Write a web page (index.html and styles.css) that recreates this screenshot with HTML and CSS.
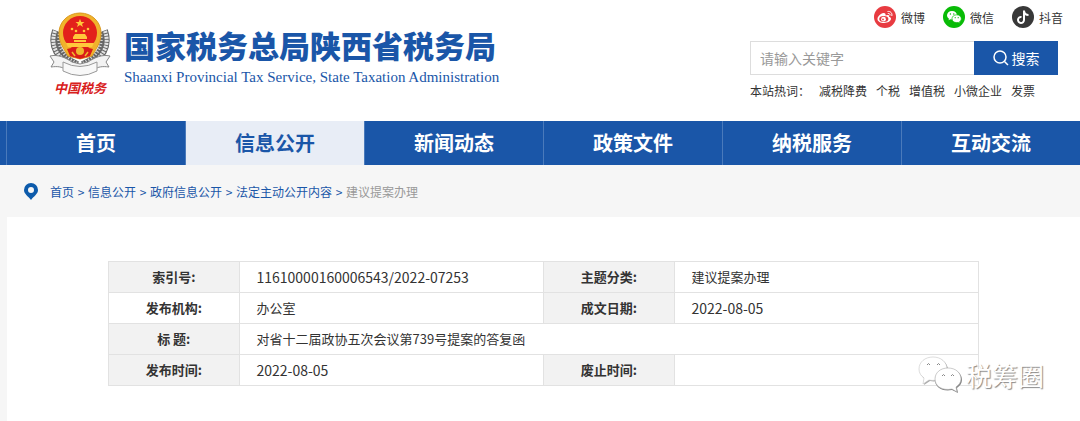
FILE: index.html
```html
<!DOCTYPE html>
<html lang="zh-CN">
<head>
  <meta charset="UTF-8" />
  <meta name="viewport" content="width=device-width, initial-scale=1.0" />
  <title>建议提案办理</title>
  <link rel="stylesheet" href="styles.css">
</head>
<body>
  <header class="header">
    <a class="brand" href="#">
      <span class="emblem">
        <svg width="64" height="66" viewBox="0 0 64 66" aria-hidden="true">
          <!-- wheat ears -->
          <g fill="none" stroke="#666" stroke-width="10">
            <path d="M9 19C4 33 10 46 29 54" />
            <path d="M55 19C60 33 54 46 35 54" />
          </g>
          <g fill="none" stroke="#e4e4e4" stroke-width="4" stroke-dasharray="2 1">
            <path d="M7 19C2 33 8 47 29 56" />
            <path d="M57 19C62 33 56 47 35 56" />
          </g>
          <g fill="none" stroke="#ddd" stroke-width="3" stroke-dasharray="1 2">
            <path d="M12 19C8 33 14 44 29 51" />
            <path d="M52 19C56 33 50 44 35 51" />
          </g>
          <!-- ribbon -->
          <path d="M2 44C10 42 18 46 24 50L32 52L40 50C46 46 54 42 62 44L58 50L61 55C54 54 50 55 47 57L32 59L17 57C14 55 10 54 3 55L6 50Z" fill="#f3f3f3" stroke="#888" />
          <path d="M15 50Q32 59 49 50V59Q32 68 15 59Z" fill="#f8f8f8" stroke="#999" />
          <!-- national emblem -->
          <path d="M32 1C44 1 53 10 53 21C53 31 48 37 44 44L32 47L20 44C16 37 11 31 11 21C11 10 20 1 32 1Z" fill="#f0b32c" stroke="#dc9a22" />
          <circle cx="32" cy="21" r="17" fill="#e3201b" />
          <path d="M32 7l1.300 3h3.200l-2.500 2 1 3-3-2-3 2 1-3-2.500-2h3.200z" fill="#ffc83b" />
          <g fill="#ffc83b">
            <circle cx="24" cy="17" r="1.300" />
            <circle cx="28" cy="19" r="1.300" />
            <circle cx="36" cy="19" r="1.300" />
            <circle cx="40" cy="17" r="1.300" />
            <path d="M25 25l2-3h10l2 3v2H25zM26 28h12v2H26zM18 31h28l-2 4H20z" />
          </g>
          <path d="M19 37L27 35L32 38L37 35L45 37L42 44L32 47L22 44Z" fill="#d91c19" />
          <circle cx="32" cy="39" r="4" fill="#f0b72c" />
          <path d="M24 40l3 4M40 40l-3 4" stroke="#f0b72c" stroke-width="1.500" />
        </svg>
        <span class="emblem-text">中国税务</span>
      </span>
      <span class="brand-name">
        <span class="brand-cn">国家税务总局陕西省税务局</span>
        <span class="brand-en">Shaanxi Provincial Tax Service, State Taxation Administration</span>
      </span>
    </a>

    <div class="tools">
      <div class="social">
        <a href="#">
          <svg width="22" height="22" viewBox="0 0 22 22" aria-hidden="true">
            <circle cx="11" cy="11" r="11" fill="#e83b41" />
            <path d="M9.500 7C6.500 7.500 3.500 10.500 3.500 13C3.500 15.500 6.500 17 10 17C14 17 17 15 17 12.800C17 11.500 16 11 15 10.700C15.500 9 14 8.500 11.500 9.500C12 7.800 11 6.800 9.500 7Z" fill="#fff" />
            <ellipse cx="9.800" cy="13" rx="4.600" ry="3" fill="#e83b41" />
            <circle cx="9.500" cy="13.200" r="2.400" fill="#fff" />
            <circle cx="9" cy="13.400" r="0.900" fill="#e83b41" />
            <path d="M13.500 5.500C16.500 5 18.500 7 17.800 10M13.800 7.500C15.500 7.200 16.300 8.200 16 9.500" fill="none" stroke="#fff" />
          </svg>
          微博
        </a>
        <a href="#">
          <svg width="22" height="22" viewBox="0 0 22 22" aria-hidden="true">
            <circle cx="11" cy="11" r="11" fill="#09bb07" />
            <path d="M9 5C6 5 4 7 4 9.300C4 10.700 4.800 11.900 6 12.700L5.500 14.300L7.500 13.300L9 13.500C13 13.500 14 11 14 9.300C14 7 12 5 9 5Z" fill="#fff" />
            <path d="M13.700 8.800C11 8.800 9 10.500 9 12.700C9 15 11 16.600 13.700 16.600L15.200 16.400L17 17.300L16.500 15.700C17.700 15 18.300 13.900 18.300 12.700C18.300 10.500 16.300 8.800 13.700 8.800Z" fill="#fff" stroke="#09bb07" stroke-width="0.700" />
            <g fill="#09bb07">
              <circle cx="7.400" cy="8" r="0.700" />
              <circle cx="10.800" cy="8" r="0.700" />
              <circle cx="12.200" cy="11.700" r="0.600" />
              <circle cx="15.200" cy="11.700" r="0.600" />
            </g>
          </svg>
          微信
        </a>
        <a href="#">
          <svg width="22" height="22" viewBox="0 0 22 22" aria-hidden="true">
            <circle cx="11" cy="11" r="11" fill="#383838" />
            <path d="M12 4.500V14A3 3 0 1 1 9.500 11M12 5C12.500 8 14 9 16.500 9" fill="none" stroke="#fff" stroke-width="2" />
          </svg>
          抖音
        </a>
      </div>
      <form class="search">
        <input type="text" placeholder="请输入关键字" aria-label="请输入关键字" />
        <button type="submit">
          <svg width="16" height="16" viewBox="0 0 16 16" aria-hidden="true">
            <circle cx="7" cy="7" r="6" fill="none" stroke="#fff" stroke-width="1.500" />
            <path d="M11.500 11.500L15 15" stroke="#fff" stroke-width="1.500" />
          </svg>
          搜索
        </button>
      </form>
      <div class="hot">
        <span>本站热词：</span>
        <a href="#">减税降费</a>
        <a href="#">个税</a>
        <a href="#">增值税</a>
        <a href="#">小微企业</a>
        <a href="#">发票</a>
      </div>
    </div>
  </header>

  <nav class="nav">
    <a href="#">首页</a>
    <a class="active" href="#">信息公开</a>
    <a href="#">新闻动态</a>
    <a href="#">政策文件</a>
    <a href="#">纳税服务</a>
    <a href="#">互动交流</a>
  </nav>

  <div class="crumbs">
    <svg width="14" height="17" viewBox="0 0 14 17" aria-hidden="true">
      <path d="M7 0A7 7 0 0 0 0 7C0 11 4 13 7 17C10 13 14 11 14 7A7 7 0 0 0 7 0ZM7 4A3 3 0 1 1 7 10A3 3 0 1 1 7 4Z" fill="#0d5bab" fill-rule="evenodd" />
    </svg>
    <a href="#">首页</a><i>&gt;</i><a href="#">信息公开</a><i>&gt;</i><a href="#">政府信息公开</a><i>&gt;</i><a href="#">法定主动公开内容</a><i>&gt;</i><span>建议提案办理</span>
  </div>

  <main class="content">
    <table class="info">
      <tr>
        <th>索引号:</th>
        <td class="num">11610000160006543/2022-07253</td>
        <th>主题分类:</th>
        <td>建议提案办理</td>
      </tr>
      <tr>
        <th class="plain">发布机构:</th>
        <td>办公室</td>
        <th>成文日期:</th>
        <td class="num">2022-08-05</td>
      </tr>
      <tr>
        <th>标 题:</th>
        <td colspan="3">对省十二届政协五次会议第739号提案的答复函</td>
      </tr>
      <tr>
        <th>发布时间:</th>
        <td class="num">2022-08-05</td>
        <th>废止时间:</th>
        <td></td>
      </tr>
    </table>
    <div class="watermark">
      <svg width="44" height="38" viewBox="0 0 44 38" aria-hidden="true">
        <path d="M16 2C8 2 2 7 2 14C2 18 4 21 7 23L6 29L12 25C20 27 30 22 30 14C30 7 24 2 16 2Z" fill="#aaa" />
        <path d="M15 1C7 1 1 6 1 13C1 17 3 20 6 22L5 28L11 24C19 26 29 21 29 13C29 6 23 1 15 1Z" fill="#fff" stroke="#bbb" stroke-width="0.500" />
        <path d="M31 13C23 13 17 18 17 24C17 31 24 36 34 34L40 37L39 32C42 30 44 27 44 24C44 18 39 13 31 13Z" fill="#888" />
        <path d="M30 12C22 12 17 17 17 23C17 30 24 35 34 33L39 36L38 31C41 29 43 26 43 23C43 17 38 12 30 12Z" fill="#fff" stroke="#999" stroke-width="0.500" />
        <path d="M9 9q1.500-3 3 0M19 9q1.500-3 3 0M24 20q1.500-3 3 0M33 20q1.500-3 3 0" fill="none" stroke="#888" />
      </svg>
      <span>税筹圈</span>
    </div>
  </main>
</body>
</html>
```
FILE: styles.css
```css
* {
  box-sizing: border-box;
}
body {
  margin: 0;
  font-family: "Noto Sans CJK SC", sans-serif;
  font-size: 12px;
  color: #333;
  background: #fff;
}
a {
  color: inherit;
  text-decoration: none;
}
.header {
  display: flex;
  justify-content: space-between;
  height: 121px;
  padding: 6px 17px 0 48px;
}
.brand {
  display: flex;
  gap: 12px;
  color: #1a56a8;
}
.emblem {
  display: flex;
  flex-direction: column;
  align-items: center;
  width: 64px;
  padding-top: 6px;
}
.emblem-text {
  color: #d8201c;
  font-size: 13px;
  font-weight: bold;
  font-style: italic;
  line-height: 20px;
}
.brand-name {
  display: flex;
  flex-direction: column;
  padding-top: 20px;
}
.brand-cn {
  font-size: 31px;
  font-weight: 900;
  line-height: 38px;
}
.brand-en {
  font-family: "Liberation Serif", serif;
  font-size: 15px;
  line-height: 26px;
}
.tools {
  width: 313px;
}
.social {
  display: flex;
  justify-content: flex-end;
  gap: 18px;
}
.social a {
  display: flex;
  align-items: center;
  gap: 5px;
  height: 22px;
}
.search {
  display: flex;
  height: 34px;
  margin: 13px 5px 0 0;
}
.search input {
  flex: 1;
  min-width: 0;
  padding: 0 9px;
  border: 1px solid #ddd;
  border-right: 0;
  font: inherit;
  font-size: 14px;
}
.search input::placeholder {
  color: #999;
}
.search button {
  display: flex;
  align-items: center;
  justify-content: center;
  gap: 3px;
  width: 84px;
  border: 0;
  background: #1a56a8;
  color: #fff;
  font: inherit;
  font-size: 14px;
}
.hot {
  display: flex;
  gap: 9px;
  line-height: 32px;
}
.nav {
  display: grid;
  grid-template-columns: repeat(6, 1fr);
  height: 44px;
  padding-left: 6px;
  background: #1a56a8;
}
.nav a {
  border-left: 1px solid #4a7abb;
  color: #fff;
  font-size: 20px;
  font-weight: bold;
  line-height: 44px;
  text-align: center;
}
.nav .active {
  background: #e8edf6;
  color: #1a56a8;
}
.crumbs {
  display: flex;
  align-items: center;
  height: 52px;
  padding-left: 24px;
  background: #f6f6f6;
  color: #1a56a8;
}
.crumbs svg {
  margin-right: 12px;
}
.crumbs i {
  width: 14px;
  font-style: normal;
  text-align: center;
}
.crumbs span {
  color: #999;
}
.content {
  position: relative;
  min-height: 204px;
  padding: 44px 101px 36px;
  border-left: 7px solid #f6f6f6;
}
.info {
  width: 100%;
  border-collapse: collapse;
  table-layout: fixed;
  font-size: 13px;
}
.info th,
.info td {
  height: 31px;
  padding: 0 17px;
  border: 1px solid #e2e2e2;
  line-height: 20px;
  text-align: left;
}
.info th {
  width: 15%;
  background: #f2f2f2;
  text-align: center;
}
.info .plain {
  background: #fff;
}
.info .num {
  font-size: 14px;
}
.watermark {
  position: absolute;
  right: 36px;
  bottom: 28px;
  display: flex;
  align-items: center;
  gap: 4px;
  color: #fff;
  font-size: 26px;
  line-height: 38px;
  text-shadow: 1px 1px 1px #888;
}
```
